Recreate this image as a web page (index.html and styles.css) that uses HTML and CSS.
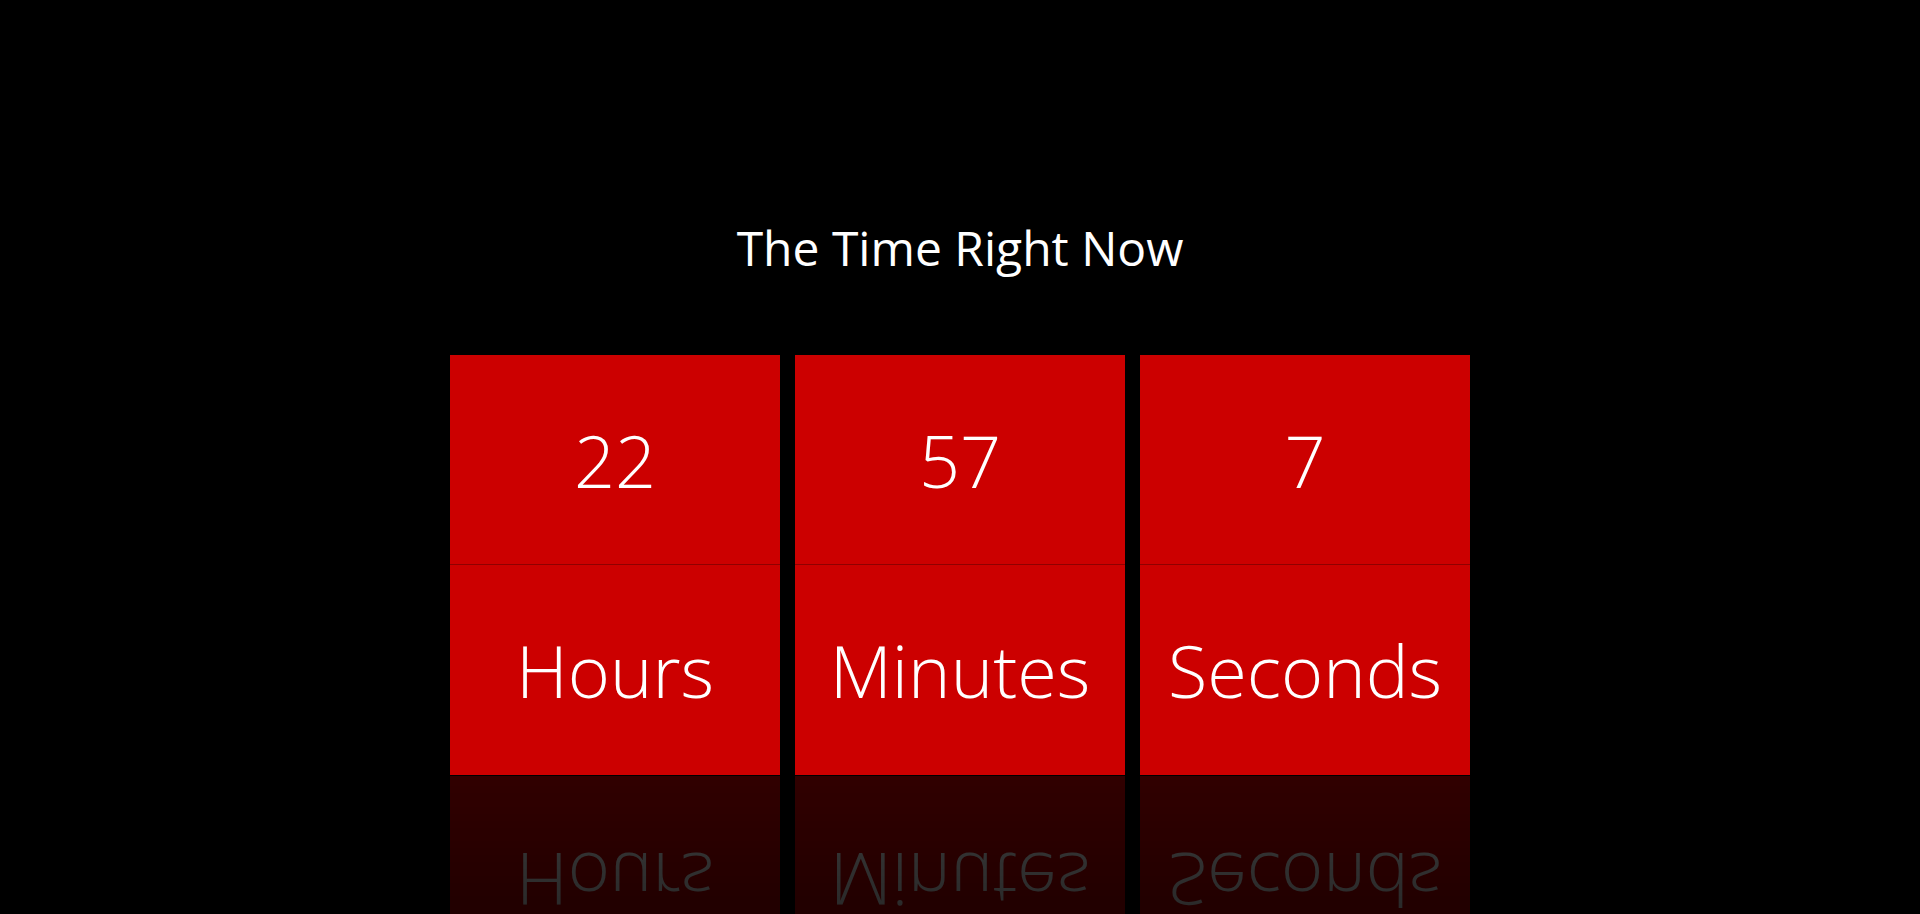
FILE: index.html
```html
<!DOCTYPE html>
<html lang="en">
<head>
<meta charset="utf-8">
<title>The Time Right Now</title>
<link rel="stylesheet" href="styles.css">
</head>
<body>
<main class="page">
  <h1 class="title">The Time Right Now</h1>
  <div class="clock">
    <div class="unit">
      <div class="value">22</div>
      <div class="label">Hours</div>
    </div>
    <div class="unit">
      <div class="value">57</div>
      <div class="label">Minutes</div>
    </div>
    <div class="unit">
      <div class="value">7</div>
      <div class="label">Seconds</div>
    </div>
  </div>
</main>
</body>
</html>
```
FILE: styles.css
```css
html, body {
  margin: 0;
  padding: 0;
  background: #000;
  height: 100%;
  overflow: hidden;
}
body {
  font-family: "Open Sans", "Liberation Sans", sans-serif;
  color: #fff;
}
.page {
  display: flex;
  flex-direction: column;
  align-items: center;
  padding-top: 216px;
}
.title {
  margin: 0;
  font-size: 48px;
  font-weight: 400;
  line-height: 64px;
  height: 64px;
}
.clock {
  display: flex;
  gap: 15px;
  margin-top: 75px;
}
.unit {
  width: 330px;
  display: flex;
  flex-direction: column;
  background: #cc0000;
  -webkit-box-reflect: below 1px linear-gradient(rgba(255,255,255,0), rgba(255,255,255,0.24));
}
.value, .label {
  height: 210px;
  display: flex;
  align-items: center;
  justify-content: center;
  font-size: 72px;
  font-weight: 300;
  line-height: 1;
}
.value {
  box-sizing: border-box;
  border-bottom: 1px solid #900000;
}
```
